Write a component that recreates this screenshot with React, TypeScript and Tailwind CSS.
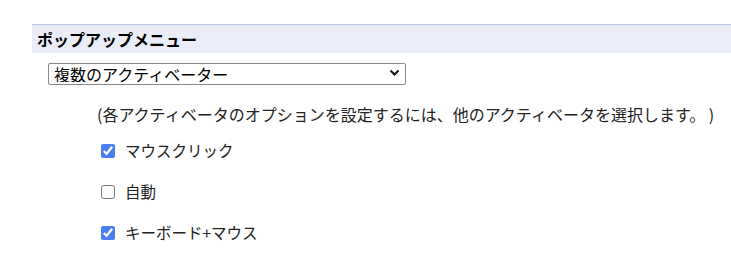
import React, { useState } from 'react';

const options = [
  { id: 'click', label: 'マウスクリック', checked: true },
  { id: 'auto', label: '自動', checked: false },
  { id: 'kbd', label: 'キーボード+マウス', checked: true },
];

export default function App() {
  const [checked, setChecked] = useState<Record<string, boolean>>(
    Object.fromEntries(options.map(o => [o.id, o.checked]))
  );

  return (
    <div className="pt-[24px] pl-[32px] bg-white text-black min-h-[268px]" style={{ fontFamily: '"Noto Sans CJK JP", "Noto Sans", sans-serif' }}>
      <div className="h-[29px] border-t border-[#b9c8e2] bg-[#eaedf7] flex items-center pl-[5px]">
        <h2 className="text-[16px] font-bold leading-none">ポップアップメニュー</h2>
      </div>

      <div className="ml-[16px] mt-[9px]">
        <div className="relative w-[358px] h-[22px]">
          <select
            className="appearance-none w-full h-full border border-[#8a8a8a] rounded-[2px] bg-white pl-[5px] pr-6 text-[16px] leading-none text-black focus:outline-none"
            defaultValue="multi"
          >
            <option value="multi">複数のアクティベーター</option>
          </select>
          <svg className="absolute right-[6px] top-[7px] pointer-events-none" width="11" height="8" viewBox="0 0 11 8">
            <path d="M1.5 1.5 L5.5 5.5 L9.5 1.5" stroke="#111" strokeWidth="2" fill="none" />
          </svg>
        </div>
      </div>

      <div className="ml-[65px] mt-[19px]">
        <p className="text-[16px] leading-[22px] text-[#222]">(各アクティベータのオプションを設定するには、他のアクティベータを選択します。 )</p>

        <div className="mt-[15px] flex flex-col gap-[19px] pl-[4px]">
          {options.map(o => (
            <label key={o.id} className="flex items-center h-[22px] gap-[10px] text-[15.5px] text-[#222]">
              <input
                type="checkbox"
                className="w-[14px] h-[14px] m-0 accent-[#4a7ff2]"
                checked={checked[o.id]}
                onChange={e => setChecked({ ...checked, [o.id]: e.target.checked })}
              />
              <span>{o.label}</span>
            </label>
          ))}
        </div>
      </div>
    </div>
  );
}
